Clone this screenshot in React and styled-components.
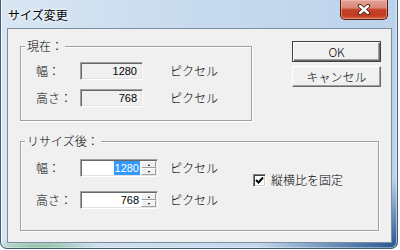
import React from 'react';
import styled, { createGlobalStyle } from 'styled-components';

const Global = createGlobalStyle`
  html, body { margin: 0; padding: 0; background: #ffffff; }
  body { font-family: "Noto Sans CJK JP", "Noto Sans", sans-serif; font-size: 12px; font-weight: 300; color: #000; }
  * { box-sizing: border-box; }
`;

const Window = styled.div`
  width: 398px;
  height: 249px;
  display: flex;
  flex-direction: column;
  border: 1px solid #4a5c70;
  border-top: none;
  border-radius: 0 0 7px 7px;
  padding: 0 5px 5px 6px;
  background:
    radial-gradient(140px 70px at 100% 100%, rgba(28, 78, 140, 0.95), rgba(28, 78, 140, 0) 100%),
    radial-gradient(60px 10px at 40px 100%, rgba(80, 160, 90, 0.6), rgba(80, 160, 90, 0) 100%),
    linear-gradient(90deg, #d8e6f3 0%, #c9dbee 45%, #bcd3eb 100%);
  box-shadow: inset 1px 0 0 rgba(255, 255, 255, 0.7), inset -1px 0 0 rgba(255, 255, 255, 0.5),
    inset 0 -1px 0 rgba(255, 255, 255, 0.4);
`;

const TitleBar = styled.div`
  height: 28px;
  display: flex;
  align-items: flex-start;
`;

const Title = styled.div`
  margin-top: 7px;
  margin-left: 1px;
  font-size: 12px;
  font-weight: 400;
  line-height: 16px;
  color: #000;
  text-shadow: 0 0 5px #fff, 0 0 3px #fff;
`;

const CloseButton = styled.div`
  margin-left: auto;
  margin-right: 4px;
  width: 48px;
  height: 20px;
  border: 1px solid #4e1e18;
  border-top: none;
  border-radius: 0 0 5px 5px;
  background: linear-gradient(180deg, #e2a497 0%, #d98876 40%, #c4402a 52%, #c23a22 80%, #d8643c 100%);
  box-shadow: inset 0 0 0 1px rgba(255, 200, 190, 0.45);
  display: flex;
  align-items: center;
  justify-content: center;
`;

const Client = styled.div`
  flex: 1;
  border: 1px solid #7d8da0;
  background: #f0f0f0;
  padding: 10px 10px 0 12px;
  display: flex;
  flex-direction: column;
`;

const TopRow = styled.div`
  display: flex;
  justify-content: space-between;
  align-items: flex-start;
`;

const Group = styled.fieldset`
  margin: 0;
  min-width: 0;
  width: ${(p) => p.$w}px;
  margin-top: ${(p) => p.$mt || 0}px;
  padding: ${(p) => p.$pt}px 0 ${(p) => p.$pb}px 15px;
  border: 1px solid #a0a0a0;
  box-shadow: inset 1px 1px 0 #ffffff, 1px 1px 0 #ffffff;
`;

const Legend = styled.legend`
  margin-left: -11px;
  padding: 0 2px;
  line-height: 14px;
  background: #f0f0f0;
`;

const Rows = styled.div`
  display: flex;
  flex-direction: column;
  gap: ${(p) => p.$gap}px;
  width: ${(p) => (p.$w ? `${p.$w}px` : 'auto')};
`;

const Row = styled.div`
  display: flex;
  align-items: center;
  height: 18px;
`;

const Label = styled.div`
  width: 44px;
  line-height: 14px;
`;

const Unit = styled.div`
  margin-left: ${(p) => p.$ml}px;
  line-height: 14px;
`;

const Field = styled.div`
  width: ${(p) => p.$w}px;
  height: 18px;
  border: 1px solid;
  border-color: #a0a0a0 #ffffff #ffffff #a0a0a0;
  box-shadow: inset 1px 1px 0 #696969, inset -1px -1px 0 #e3e3e3;
  background: ${(p) => (p.$ro ? '#f0f0f0' : '#ffffff')};
  display: flex;
  align-items: center;
  justify-content: flex-end;
  padding: 1px ${(p) => p.$pr}px 1px 2px;
`;

const Num = styled.span`
  font-family: "Liberation Sans", Arial, sans-serif;
  font-size: 11px;
  font-weight: 400;
  line-height: 14px;
  padding: 0 1px;
  background: ${(p) => (p.$sel ? '#3399ff' : 'transparent')};
  color: ${(p) => (p.$sel ? '#ffffff' : '#000000')};
`;

const Spin = styled.div`
  display: flex;
  flex-direction: column;
  width: 15px;
  height: 14px;
  margin-left: 1px;
`;

const SpinBtn = styled.div`
  flex: 1;
  background: #f0f0f0;
  border: 1px solid;
  border-color: #ffffff #a0a0a0 #a0a0a0 #ffffff;
  display: flex;
  align-items: center;
  justify-content: center;
  &::after {
    content: '';
    width: 0;
    height: 0;
    border-left: 1.5px solid transparent;
    border-right: 1.5px solid transparent;
    ${(p) => (p.$up ? 'border-bottom: 2px solid #000;' : 'border-top: 2px solid #000;')}
  }
`;

const Buttons = styled.div`
  display: flex;
  flex-direction: column;
  gap: 4px;
  margin-top: 2px;
  width: 89px;
`;

const Button = styled.div`
  height: 21px;
  display: flex;
  align-items: center;
  justify-content: center;
  background: #f0f0f0;
  line-height: 14px;
  border: 1px solid;
  border-color: ${(p) => (p.$default ? '#404040' : '#ffffff #696969 #696969 #ffffff')};
  box-shadow: ${(p) =>
    p.$default
      ? 'inset 1px 1px 0 #ffffff, inset -1px -1px 0 #696969, inset -2px -2px 0 #a0a0a0'
      : 'inset -1px -1px 0 #a0a0a0'};
`;

const Body2 = styled.div`
  display: flex;
  align-items: flex-start;
`;

const CheckItem = styled.label`
  display: flex;
  align-items: center;
  gap: 5px;
  margin-top: 14px;
  line-height: 14px;
`;

const CheckBox = styled.div`
  width: 13px;
  height: 13px;
  border: 1px solid;
  border-color: #808080 #ffffff #ffffff #808080;
  box-shadow: inset 1px 1px 0 #404040, inset -1px -1px 0 #d4d0c8;
  background: #ffffff;
  display: flex;
  align-items: center;
  justify-content: center;
`;

const CloseX = () => (
  <svg width="14" height="11" viewBox="0 0 14 11">
    <path d="M3 2 L11 9 M11 2 L3 9" stroke="#4a1c16" strokeWidth="4.2" strokeLinecap="round" fill="none" />
    <path d="M3 2 L11 9 M11 2 L3 9" stroke="#ffffff" strokeWidth="2.4" strokeLinecap="round" fill="none" />
  </svg>
);

const Check = () => (
  <svg width="9" height="9" viewBox="0 0 9 9">
    <path d="M1 4 L3.5 6.5 L8 1.5" stroke="#000" strokeWidth="2" fill="none" />
  </svg>
);

export default function App() {
  return (
    <>
      <Global />
      <Window>
        <TitleBar>
          <Title>サイズ変更</Title>
          <CloseButton>
            <CloseX />
          </CloseButton>
        </TitleBar>
        <Client>
          <TopRow>
            <Group $w={232} $pt={9} $pb={13}>
              <Legend>現在：</Legend>
              <Rows $gap={9}>
                <Row>
                  <Label>幅：</Label>
                  <Field $w={63} $ro $pr={4}>
                    <Num>1280</Num>
                  </Field>
                  <Unit $ml={27}>ピクセル</Unit>
                </Row>
                <Row>
                  <Label>高さ：</Label>
                  <Field $w={63} $ro $pr={4}>
                    <Num>768</Num>
                  </Field>
                  <Unit $ml={27}>ピクセル</Unit>
                </Row>
              </Rows>
            </Group>
            <Buttons>
              <Button $default>OK</Button>
              <Button>キャンセル</Button>
            </Buttons>
          </TopRow>
          <Group $w={359} $mt={13} $pt={11} $pb={21}>
            <Legend>リサイズ後：</Legend>
            <Body2>
              <Rows $gap={14} $w={217}>
                <Row>
                  <Label>幅：</Label>
                  <Field $w={78} $pr={1}>
                    <Num $sel>1280</Num>
                    <Spin>
                      <SpinBtn $up />
                      <SpinBtn />
                    </Spin>
                  </Field>
                  <Unit $ml={12}>ピクセル</Unit>
                </Row>
                <Row>
                  <Label>高さ：</Label>
                  <Field $w={78} $pr={1}>
                    <Num>768</Num>
                    <Spin>
                      <SpinBtn $up />
                      <SpinBtn />
                    </Spin>
                  </Field>
                  <Unit $ml={12}>ピクセル</Unit>
                </Row>
              </Rows>
              <CheckItem>
                <CheckBox>
                  <Check />
                </CheckBox>
                縦横比を固定
              </CheckItem>
            </Body2>
          </Group>
        </Client>
      </Window>
    </>
  );
}
